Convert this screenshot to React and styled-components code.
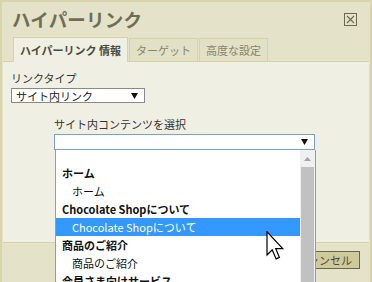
import styled, { createGlobalStyle } from 'styled-components';

const GlobalStyle = createGlobalStyle`
  html, body {
    margin: 0;
    padding: 0;
    background: #e4e2c9;
  }
  body {
    font-family: "Noto Sans CJK JP", "Noto Sans", sans-serif;
  }
`;

const Dialog = styled.div`
  position: relative;
  box-sizing: border-box;
  width: 372px;
  height: 282px;
  border: 2px solid #d8d5aa;
  border-bottom: none;
  background: #e4e2c9;
  display: flex;
  flex-direction: column;
  overflow: hidden;
`;

/**
 * HEADER
 */

const Header = styled.div`
  height: 35px;
  display: flex;
  align-items: center;
  justify-content: space-between;
  padding: 0 13px 0 10px;
  box-sizing: border-box;
`;

const Title = styled.h1`
  margin: 0;
  font-size: 18.5px;
  font-weight: 700;
  letter-spacing: 0.2px;
  color: #6e6e56;
  line-height: 1;
`;

const CloseButton = styled.button`
  border: none;
  background: none;
  padding: 0;
  width: 13px;
  height: 13px;
  display: flex;
  cursor: pointer;
`;

/**
 * TABS
 */

const TabBar = styled.div`
  display: flex;
  align-items: flex-end;
  gap: 1px;
  padding-left: 11px;
  height: 24px;
`;

const Tab = styled.div`
  box-sizing: border-box;
  height: ${(props) => (props.active ? '25px' : '23px')};
  margin-bottom: ${(props) => (props.active ? '-1px' : '0')};
  padding: 0 6px;
  display: flex;
  align-items: center;
  font-size: 11px;
  font-weight: ${(props) => (props.active ? 700 : 400)};
  color: ${(props) => (props.active ? '#4b4b3c' : '#85856c')};
  background: ${(props) => (props.active ? '#efefe3' : '#e2e0c5')};
  border: 1px solid #d6d3a6;
  border-bottom: none;
  position: relative;
  z-index: 1;
`;

const Panel = styled.div`
  position: relative;
  height: 182px;
  box-sizing: border-box;
  background: #efefe3;
  border-top: 1px solid #d6d3a6;
  border-bottom: 1px solid #d6d3a6;
  margin: 0 1px;
  padding: 9px 8px 0 8px;
`;

const Label = styled.div`
  font-size: 11px;
  line-height: 14px;
  color: #333333;
`;

const Select = styled.div`
  position: relative;
  box-sizing: border-box;
  width: ${(props) => props.width}px;
  height: ${(props) => props.height}px;
  margin-top: 3px;
  background: #ffffff;
  border: 1px solid ${(props) => (props.focused ? '#7b9fd4' : '#8a8a8a')};
  display: flex;
  align-items: center;
  justify-content: space-between;
  padding: 0 6px 0 4px;
  font-size: 11px;
  color: #222222;
`;

const Field = styled.div`
  margin: 14px 0 0 43px;
`;

/**
 * DROPDOWN LIST
 */

const Dropdown = styled.div`
  position: absolute;
  top: 15px;
  left: 0;
  width: 261px;
  height: 150px;
  box-sizing: border-box;
  background: #ffffff;
  border: 1px solid #7b9fd4;
  border-top: none;
  display: flex;
  z-index: 5;
`;

const Options = styled.ul`
  flex: 1;
  list-style: none;
  margin: 0;
  padding: 14px 0 0 0;
`;

const Option = styled.li`
  height: 18px;
  line-height: 18px;
  font-size: 11px;
  padding-left: ${(props) => (props.group ? '6px' : '16px')};
  font-weight: ${(props) => (props.group ? 700 : 400)};
  color: ${(props) => (props.selected ? '#ffffff' : '#111111')};
  background: ${(props) => (props.selected ? '#3399ff' : 'transparent')};
  white-space: nowrap;
`;

const Scrollbar = styled.div`
  width: 15px;
  background: #f0f0f0;
  display: flex;
  flex-direction: column;
  align-items: center;
`;

const ScrollUp = styled.div`
  height: 17px;
  display: flex;
  align-items: center;
  justify-content: center;
`;

const Thumb = styled.div`
  width: 13px;
  flex: 1;
  background: #c1c1c1;
`;

/**
 * FOOTER
 */

const Footer = styled.div`
  flex: 1;
  display: flex;
  justify-content: flex-end;
  align-items: flex-start;
  padding: 8px 10px 0 0;
`;

const Button = styled.button`
  height: 18px;
  box-sizing: border-box;
  padding: 0 7px;
  border: 1px solid #66664c;
  background: #cfca9b;
  color: #4a4a36;
  font-family: inherit;
  font-size: 11px;
  line-height: 1;
`;

const Pointer = styled.svg`
  position: absolute;
  left: 264px;
  top: 229px;
  z-index: 10;
`;

const items = [
  { label: 'ホーム', group: true },
  { label: 'ホーム' },
  { label: 'Chocolate Shopについて', group: true },
  { label: 'Chocolate Shopについて', selected: true },
  { label: '商品のご紹介', group: true },
  { label: '商品のご紹介' },
  { label: '会員さま向けサービス', group: true },
];

function DownArrow() {
  return (
    <svg width="7" height="6" viewBox="0 0 7 6">
      <path d="M0 0 L7 0 L3.5 6 Z" fill="#111111" />
    </svg>
  );
}

export default function App() {
  return (
    <>
      <GlobalStyle />
      <Dialog>
        <Header>
          <Title>ハイパーリンク</Title>
          <CloseButton aria-label="close">
            <svg width="13" height="13" viewBox="0 0 13 13">
              <rect x="0.5" y="0.5" width="12" height="12" fill="none" stroke="#6a6a52" />
              <path d="M3 3 L10 10 M10 3 L3 10" stroke="#6a6a52" strokeWidth="1.1" />
            </svg>
          </CloseButton>
        </Header>
        <TabBar>
          <Tab active>ハイパーリンク 情報</Tab>
          <Tab>ターゲット</Tab>
          <Tab>高度な設定</Tab>
        </TabBar>
        <Panel>
          <Label>リンクタイプ</Label>
          <Select width={134} height={15}>
            サイト内リンク
            <DownArrow />
          </Select>
          <Field>
            <Label>サイト内コンテンツを選択</Label>
            <Select width={261} height={16} focused>
              <span />
              <DownArrow />
              <Dropdown>
                <Options>
                  {items.map((item, i) => (
                    <Option key={i} group={item.group} selected={item.selected}>
                      {item.label}
                    </Option>
                  ))}
                </Options>
                <Scrollbar>
                  <ScrollUp>
                    <svg width="7" height="4" viewBox="0 0 7 4">
                      <path d="M0 4 L3.5 0 L7 4 Z" fill="#a3a3a3" />
                    </svg>
                  </ScrollUp>
                  <Thumb />
                </Scrollbar>
              </Dropdown>
            </Select>
          </Field>
        </Panel>
        <Footer>
          <Button>キャンセル</Button>
        </Footer>
        <Pointer width="20" height="30" viewBox="0 0 13 20">
          <path
            d="M0.5 0.5 L0.5 16 L4 12.6 L6.6 18.6 L8.8 17.6 L6.3 11.8 L11 11.8 Z"
            fill="#ffffff"
            stroke="#000000"
            strokeWidth="0.8"
            strokeLinejoin="miter"
          />
        </Pointer>
      </Dialog>
    </>
  );
}
